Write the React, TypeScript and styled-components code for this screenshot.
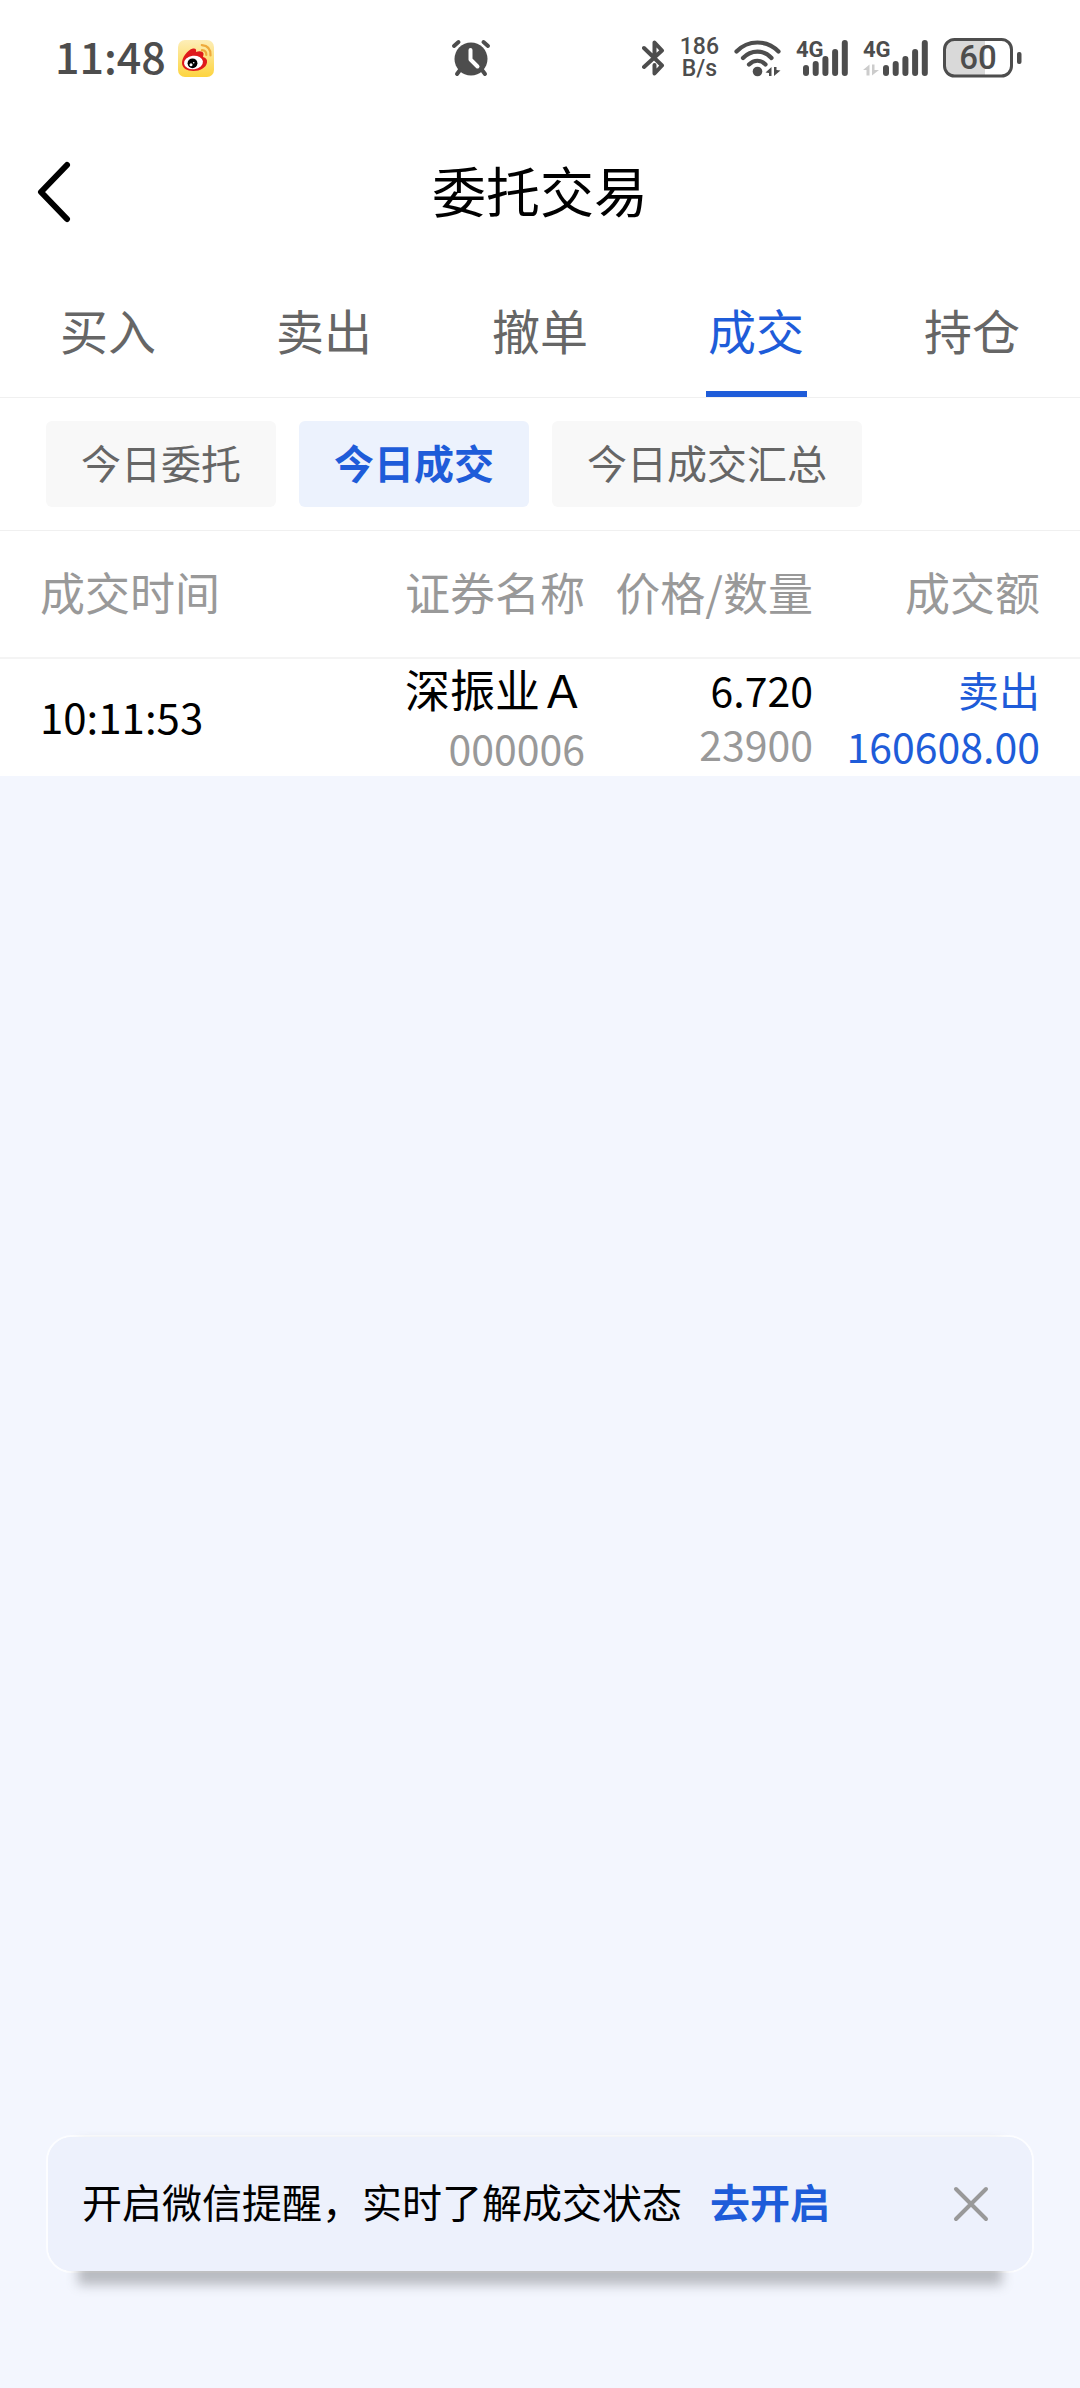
import React, { useState } from "react";
import styled, { createGlobalStyle } from "styled-components";

const GlobalStyle = createGlobalStyle`
  *, *::before, *::after { box-sizing: border-box; }
  body {
    margin: 0;
    background: #f3f6fe;
    color: #000;
    font-family: "Noto Sans CJK SC", sans-serif;
  }
  button {
    margin: 0;
    padding: 0;
    border: 0;
    background: none;
    color: inherit;
    font: inherit;
    cursor: pointer;
  }
`;

const Page = styled.div`
  min-height: 100vh;
  display: flex;
  flex-direction: column;
`;

const StatusBar = styled.div`
  height: 116px;
  display: flex;
  align-items: center;
  padding: 0 58px 0 55px;
  background: #fff;
  color: #4d4d4d;
`;

const StatusStart = styled.div`
  flex: 0 0 41%;
  display: flex;
  align-items: center;
  gap: 12px;
`;

const Clock = styled.time`
  padding-bottom: 6px;
  font-size: 43px;
  line-height: 46px;
  font-weight: 500;
`;

const StatusEnd = styled.div`
  margin-left: auto;
  display: flex;
  align-items: center;
  gap: 15px;
`;

const NetSpeed = styled.div`
  text-align: center;
  font-family: Roboto, sans-serif;
  font-size: 23px;
  line-height: 22px;
  font-weight: 500;
`;

const TitleBar = styled.header`
  height: 152px;
  display: grid;
  grid-template-columns: 108px 1fr 108px;
  align-items: center;
  background: #fff;
`;

const BackButton = styled.button`
  height: 100%;
  display: flex;
  align-items: center;
  padding-left: 36px;
`;

const Title = styled.h1`
  margin: 0;
  padding-bottom: 4px;
  font-size: 54px;
  line-height: 80px;
  font-weight: 400;
  text-align: center;
`;

const Tabs = styled.nav`
  display: flex;
  background: #fff;
  border-bottom: 1px solid #f0f0f0;
`;

const Tab = styled.button<{ $active: boolean }>`
  flex: 1;
  display: flex;
  justify-content: center;
  color: ${(p) => (p.$active ? "#1e5cd9" : "#666")};
  font-size: 48px;
  line-height: 123px;

  span {
    width: 101px;
    border-bottom: 6px solid ${(p) => (p.$active ? "#1e5cd9" : "transparent")};
  }
`;

const Chips = styled.div`
  display: flex;
  gap: 23px;
  padding: 23px 46px;
  background: #fff;
  border-bottom: 1px solid #f0f0f0;
`;

const Chip = styled.button<{ $active: boolean }>`
  height: 86px;
  padding: 0 35px 4px;
  border-radius: 6px;
  background: ${(p) => (p.$active ? "#ecf2fd" : "#f8f8f8")};
  color: ${(p) => (p.$active ? "#1e5cd9" : "#666")};
  font-size: 40px;
  line-height: 60px;
  font-weight: ${(p) => (p.$active ? 700 : 400)};
`;

const Deals = styled.table`
  width: 100%;
  table-layout: fixed;
  border-collapse: separate;
  border-spacing: 0;
  background: #fff;
`;

const Col = styled.col<{ $width?: number }>`
  width: ${(p) => (p.$width ? `${p.$width}px` : "auto")};
`;

const HeadCell = styled.th`
  height: 128px;
  padding: 0 0 4px;
  border-bottom: 2px solid #f4f4f4;
  color: #999;
  font-size: 45px;
  line-height: 60px;
  font-weight: 400;
  text-align: right;
  white-space: nowrap;

  &:first-child { padding-left: 40px; text-align: left; }
  &:last-child { padding-right: 40px; }
`;

const Cell = styled.td`
  height: 117px;
  padding: 3px 0 0;
  font-size: 41px;
  line-height: 54px;
  text-align: right;
  vertical-align: top;
  white-space: nowrap;

  &:last-child { padding-right: 40px; }
`;

const TimeCell = styled(Cell)`
  padding: 0 0 4px 40px;
  font-size: 42px;
  text-align: left;
  vertical-align: middle;
`;

const Stack = styled.div<{ $gap: number; $blue?: boolean }>`
  display: grid;
  gap: ${(p) => p.$gap}px;
  color: ${(p) => (p.$blue ? "#1e5cd9" : "#000")};
`;

const Name = styled.span`
  font-size: 45px;
`;

const Muted = styled.span`
  color: #999;
`;

const Notice = styled.aside`
  position: relative;
  z-index: 0;
  display: flex;
  align-items: center;
  height: 138px;
  margin: auto 46px 115px;
  padding: 0 34px;
  border: 2px solid #fcfdff;
  border-radius: 26px;
  background: #edf1fc;
  font-size: 40px;
  line-height: 60px;

  &::before {
    content: "";
    position: absolute;
    z-index: -2;
    inset: 6px 30px -14px;
    background: rgba(0, 0, 0, 0.24);
    filter: blur(6px);
  }

  &::after {
    content: "";
    position: absolute;
    z-index: -1;
    inset: 0;
    border-radius: 24px;
    background: #edf1fc;
  }
`;

const NoticeText = styled.span`
  padding-bottom: 6px;
`;

const NoticeAction = styled.button`
  margin-left: 28px;
  padding-bottom: 6px;
  color: #1e5cd9;
  font-weight: 700;
`;

const CloseButton = styled.button`
  margin-left: auto;
  width: 54px;
  height: 54px;
  display: grid;
  place-items: center;
`;

const WeiboIcon = () => (
  <svg width="36" height="37" viewBox="0 0 36 37">
    <defs>
      <linearGradient id="weiboBg" x1="0" y1="0" x2="0" y2="1">
        <stop offset="0" stopColor="#fdeeb8" />
        <stop offset="1" stopColor="#fdd43f" />
      </linearGradient>
    </defs>
    <rect width="36" height="37" rx="7" fill="url(#weiboBg)" />
    <path d="M4 23C4 18 9 10 15 8.500C18 8 18.500 10 18 12C21 10.800 25 11 25.500 13.500C25.700 15 25 16 25 17C28 18 29.500 19.500 29 22.500C28 28 22 31 15.500 31C9 31 4 28 4 23Z" fill="#df1a1c" />
    <ellipse cx="15.500" cy="22.500" rx="9.500" ry="6.800" fill="#fff" transform="rotate(-7 15.500 22.500)" />
    <circle cx="14.500" cy="23.300" r="4.900" fill="#000" />
    <circle cx="13" cy="24.800" r="1.500" fill="#fff" />
    <circle cx="15.700" cy="22.800" r=".8" fill="#fff" />
    <path d="M24 10.200Q28.500 10.500 28.300 15M23.800 5.200Q33 6 32.500 15.500" fill="none" stroke="#eeaa3c" strokeWidth="2.200" strokeLinecap="round" />
  </svg>
);

const AlarmIcon = () => (
  <svg width="40" height="38" viewBox="0 0 40 38">
    <circle cx="20" cy="20" r="16.500" fill="#4d4d4d" />
    <g stroke="#4d4d4d" strokeWidth="4" strokeLinecap="round">
      <path d="M3 7L7.500 3M32.500 3L37 7M9 31L6 35M31 31L34 35" />
    </g>
    <path d="M19.500 11V20.500L26.500 27.500" fill="none" stroke="#fff" strokeWidth="4" strokeLinecap="round" strokeLinejoin="round" />
  </svg>
);

const BluetoothIcon = () => (
  <svg width="23" height="38" viewBox="0 0 23 38">
    <path d="M2 9L20 26.500L12.500 34.500V26M2 28L20 11.500L12.500 3.500V17" fill="none" stroke="#4d4d4d" strokeWidth="4" strokeLinecap="round" strokeLinejoin="round" />
  </svg>
);

const WifiIcon = () => (
  <svg width="47" height="37" viewBox="0 0 47 37">
    <g fill="none" stroke="#4d4d4d" strokeWidth="4.200" strokeLinecap="round">
      <path d="M2.500 11.500C14 -.5 33 -.5 44.500 11.500" />
      <path d="M9 18C17 9.500 30 9.500 37.500 18" />
      <path d="M15 24.500C20 19.500 27 19.500 31.500 24.500" />
    </g>
    <circle cx="23.500" cy="31.500" r="4.800" fill="#4d4d4d" />
    <path d="M37.500 27V36H35V33L31.500 32.500ZM40 36V27H42.500V30L46.500 30.500Z" fill="#4d4d4d" />
  </svg>
);

const BARS = [11, 15, 20, 27, 36];

const CellSignal = ({ idleData = false }: { idleData?: boolean }) => {
  const start = idleData ? 20 : 7;
  return (
    <svg width={start + 45} height="46" viewBox={`0 -4 ${start + 45} 46`}>
      <text x="0" y="18" fontFamily="Roboto, sans-serif" fontSize="22" fontWeight="700" fill="#4d4d4d">4G</text>
      {BARS.map((h, i) => (
        <rect key={h} x={start + i * 9.7} y={37 - h} width="6" height={h} rx="3" fill="#4d4d4d" />
      ))}
      {idleData && <path d="M0 31L6.500 25.500V36.500H3.500V31ZM9 36.500V25.500H11.500V31H16Z" fill="#ccc" />}
    </svg>
  );
};

const BatteryIcon = () => (
  <svg width="79" height="40" viewBox="0 0 79 40">
    <path d="M42 2H12Q2 2 2 12V28Q2 38 12 38H42Z" fill="#d9d9d9" />
    <rect x="1.500" y="1.500" width="67" height="36.500" rx="10" fill="none" stroke="#4d4d4d" strokeWidth="3" />
    <rect x="74" y="14" width="4.500" height="12" rx="2" fill="#4d4d4d" />
    <text x="35" y="31" textAnchor="middle" fontFamily="Roboto, sans-serif" fontSize="33" fontWeight="500" fill="#4d4d4d">60</text>
  </svg>
);

const BackIcon = () => (
  <svg width="36" height="62" viewBox="0 0 36 62">
    <path d="M31 4L5 31L31 58" fill="none" stroke="#000" strokeWidth="6" strokeLinecap="round" strokeLinejoin="round" />
  </svg>
);

const CloseIcon = () => (
  <svg width="36" height="36" viewBox="0 0 36 36">
    <path d="M3 3L33 33M33 3L3 33" stroke="#999" strokeWidth="4" strokeLinecap="round" />
  </svg>
);

const TABS = ["买入", "卖出", "撤单", "成交", "持仓"];
const CHIPS = ["今日委托", "今日成交", "今日成交汇总"];
const COLUMNS = [
  { label: "成交时间" },
  { label: "证券名称", width: 256 },
  { label: "价格/数量", width: 228 },
  { label: "成交额", width: 267 },
];
const DEALS = [
  { time: "10:11:53", name: "深振业Ａ", code: "000006", price: "6.720", qty: "23900", side: "卖出", amount: "160608.00" },
];

export default function App() {
  const [tab, setTab] = useState("成交");
  const [chip, setChip] = useState("今日成交");
  const [noticeOpen, setNoticeOpen] = useState(true);

  return (
    <>
      <GlobalStyle />
      <Page>
        <StatusBar>
          <StatusStart>
            <Clock>11:48</Clock>
            <WeiboIcon />
          </StatusStart>
          <AlarmIcon />
          <StatusEnd>
            <BluetoothIcon />
            <NetSpeed>
              186
              <br />
              B/s
            </NetSpeed>
            <WifiIcon />
            <CellSignal />
            <CellSignal idleData />
            <BatteryIcon />
          </StatusEnd>
        </StatusBar>

        <TitleBar>
          <BackButton aria-label="返回">
            <BackIcon />
          </BackButton>
          <Title>委托交易</Title>
        </TitleBar>

        <Tabs>
          {TABS.map((t) => (
            <Tab key={t} $active={t === tab} onClick={() => setTab(t)}>
              <span>{t}</span>
            </Tab>
          ))}
        </Tabs>

        <Chips>
          {CHIPS.map((c) => (
            <Chip key={c} $active={c === chip} onClick={() => setChip(c)}>
              {c}
            </Chip>
          ))}
        </Chips>

        <Deals>
          <colgroup>
            {COLUMNS.map((c) => (
              <Col key={c.label} $width={c.width} />
            ))}
          </colgroup>
          <thead>
            <tr>
              {COLUMNS.map((c) => (
                <HeadCell key={c.label} scope="col">
                  {c.label}
                </HeadCell>
              ))}
            </tr>
          </thead>
          <tbody>
            {DEALS.map((d) => (
              <tr key={d.time}>
                <TimeCell>{d.time}</TimeCell>
                <Cell>
                  <Stack $gap={4}>
                    <Name>{d.name}</Name>
                    <Muted>{d.code}</Muted>
                  </Stack>
                </Cell>
                <Cell>
                  <Stack $gap={0}>
                    <span>{d.price}</span>
                    <Muted>{d.qty}</Muted>
                  </Stack>
                </Cell>
                <Cell>
                  <Stack $gap={2} $blue>
                    <span>{d.side}</span>
                    <span>{d.amount}</span>
                  </Stack>
                </Cell>
              </tr>
            ))}
          </tbody>
        </Deals>

        {noticeOpen && (
          <Notice>
            <NoticeText>开启微信提醒，实时了解成交状态</NoticeText>
            <NoticeAction>去开启</NoticeAction>
            <CloseButton aria-label="关闭" onClick={() => setNoticeOpen(false)}>
              <CloseIcon />
            </CloseButton>
          </Notice>
        )}
      </Page>
    </>
  );
}
